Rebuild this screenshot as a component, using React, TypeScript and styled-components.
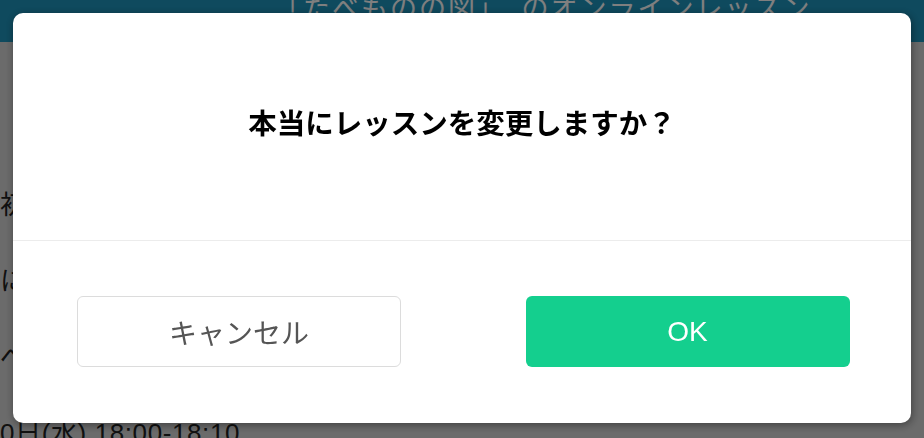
import styled, { createGlobalStyle } from 'styled-components';

const GlobalStyle = createGlobalStyle`
  html, body {
    margin: 0;
    padding: 0;
    width: 100%;
    height: 100%;
    overflow: hidden;
  }
  body {
    font-family: "Liberation Sans", "Noto Sans CJK JP", sans-serif;
    background-color: #d6d6d6;
  }
`;

const lessonLines = [
  { text: '初回レッスンのご案内', indent: 0 },
  { text: 'にんじんとピーマン', indent: 0 },
  { text: 'べんきょうする内容', indent: 0 },
  { text: '10日(水) 18:00-18:10', indent: -15 },
];

export default function App() {
  return (
    <>
      <GlobalStyle />
      <Page>
        <Header>
          <HeaderTitle>「たべものの図」　のオンラインレッスン</HeaderTitle>
        </Header>
        <Content>
          {lessonLines.map((line) => (
            <Line key={line.text} $indent={line.indent}>
              {line.text}
            </Line>
          ))}
        </Content>
      </Page>
      <Overlay>
        <Dialog role="dialog" aria-modal="true">
          <MessageArea>
            <Message>本当にレッスンを変更しますか？</Message>
          </MessageArea>
          <Actions>
            <CancelButton type="button">キャンセル</CancelButton>
            <OkButton type="button">OK</OkButton>
          </Actions>
        </Dialog>
      </Overlay>
    </>
  );
}

const Page = styled.div`
  display: flex;
  flex-direction: column;
  min-height: 100vh;
`;

const Header = styled.header`
  height: 42px;
  display: flex;
  align-items: flex-start;
  padding-left: 274px;
  background-color: #1e94bc;
`;

const HeaderTitle = styled.h1`
  margin: 0;
  font-size: 27px;
  font-weight: normal;
  line-height: 19px;
  letter-spacing: 2px;
  color: #ffffff;
  white-space: nowrap;
`;

const Content = styled.main`
  display: flex;
  flex-direction: column;
  gap: 40px;
  padding-top: 145px;
`;

const Line = styled.p<{ $indent: number }>`
  margin: 0;
  font-size: 26px;
  line-height: 36px;
  letter-spacing: 0.6px;
  color: #222;
  white-space: nowrap;
  text-indent: ${(p) => p.$indent}px;
`;

const Overlay = styled.div`
  position: fixed;
  inset: 0;
  display: flex;
  align-items: center;
  justify-content: center;
  background-color: rgba(0, 0, 0, 0.5);
`;

const Dialog = styled.div`
  width: 898px;
  height: 410px;
  margin-top: -2px;
  display: flex;
  flex-direction: column;
  background-color: #ffffff;
  border-radius: 10px;
  box-shadow: 1px 2px 8px rgba(0, 0, 0, 0.4);
  overflow: hidden;
`;

const MessageArea = styled.div`
  height: 228px;
  display: flex;
  align-items: center;
  justify-content: center;
  padding-bottom: 10px;
  box-sizing: border-box;
  border-bottom: 1px solid #ececec;
`;

const Message = styled.p`
  margin: 0;
  font-size: 28.5px;
  font-weight: bold;
  color: #000;
`;

const Actions = styled.div`
  flex: 1;
  display: grid;
  grid-template-columns: 1fr 1fr;
  justify-items: center;
  align-items: start;
  padding-top: 55px;
`;

const BaseButton = styled.button`
  width: 324px;
  height: 71px;
  border-radius: 6px;
  font-family: "Liberation Sans", "Noto Sans CJK JP", sans-serif;
  font-size: 28px;
  cursor: pointer;
`;

const CancelButton = styled(BaseButton)`
  margin-left: 3px;
  background-color: #ffffff;
  border: 1px solid #dcdcdc;
  color: #555555;
`;

const OkButton = styled(BaseButton)`
  margin-left: 2px;
  background-color: #14cf8e;
  border: none;
  color: #ffffff;
`;
